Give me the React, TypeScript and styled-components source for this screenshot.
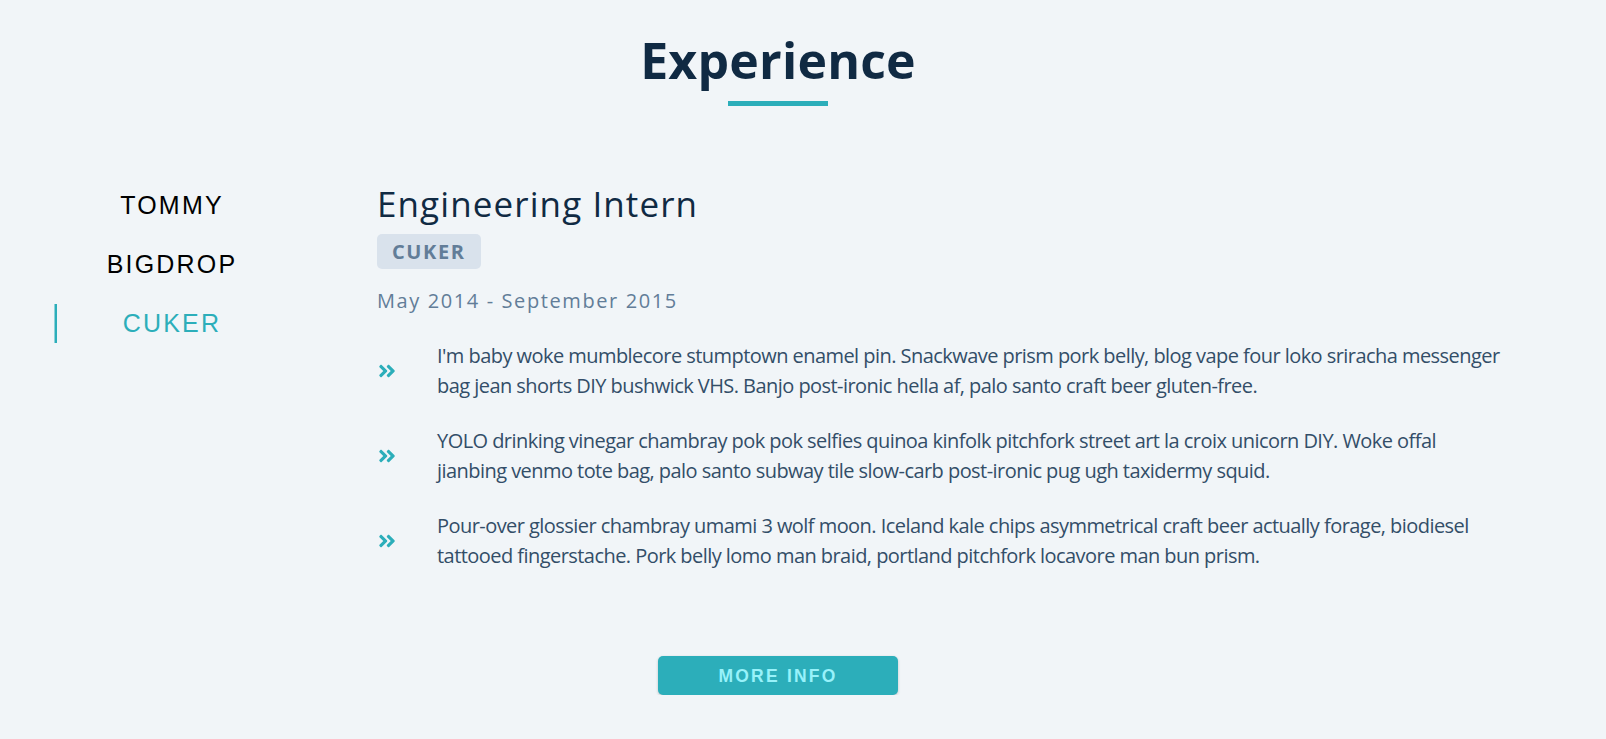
import React, { useState } from 'react';
import styled, { createGlobalStyle } from 'styled-components';
import { FaAngleDoubleRight } from 'react-icons/fa';

const teal = '#2caeba';

const GlobalStyle = createGlobalStyle`
	body {
		margin: 0;
		background: #f1f5f8;
		font-family: 'Open Sans', sans-serif;
		color: #102a43;
	}
`;

const jobs = [
	{
		id: 'tommy',
		company: 'TOMMY',
		title: 'Full Stack Web Developer',
		dates: 'December 2015 - Present',
		duties: [],
	},
	{
		id: 'bigdrop',
		company: 'BIGDROP',
		title: 'Front-End Engineer',
		dates: 'May 2015 - December 2015',
		duties: [],
	},
	{
		id: 'cuker',
		company: 'CUKER',
		title: 'Engineering Intern',
		dates: 'May 2014 - September 2015',
		duties: [
			"I'm baby woke mumblecore stumptown enamel pin. Snackwave prism pork belly, blog vape four loko sriracha messenger bag jean shorts DIY bushwick VHS. Banjo post-ironic hella af, palo santo craft beer gluten-free.",
			'YOLO drinking vinegar chambray pok pok selfies quinoa kinfolk pitchfork street art la croix unicorn DIY. Woke offal jianbing venmo tote bag, palo santo subway tile slow-carb post-ironic pug ugh taxidermy squid.',
			'Pour-over glossier chambray umami 3 wolf moon. Iceland kale chips asymmetrical craft beer actually forage, biodiesel tattooed fingerstache. Pork belly lomo man braid, portland pitchfork locavore man bun prism.',
		],
	},
];

const Section = styled.section`
	width: 1462px;
	margin-left: 47px;
	padding-top: 35px;
`;

const Title = styled.div`
	text-align: center;
	margin-bottom: 80px;

	h2 {
		margin: 0;
		font-size: 50px;
		line-height: 50px;
		font-weight: 700;
		letter-spacing: 0.2px;
		color: #102a43;
	}
`;

const Underline = styled.div`
	width: 100px;
	height: 5px;
	margin: 16px auto 0;
	background: ${teal};
`;

const JobsCenter = styled.div`
	display: grid;
	grid-template-columns: 250px 1fr;
	column-gap: 80px;
`;

const BtnContainer = styled.div`
	display: flex;
	flex-direction: column;
`;

const JobBtn = styled.button<{ $active?: boolean }>`
	background: transparent;
	border: 2.5px solid transparent;
	margin: 0 10px 20px;
	padding: 5px 0;
	font-family: 'Liberation Sans', Arial, sans-serif;
	font-size: 25px;
	line-height: 1;
	letter-spacing: 2.2px;
	cursor: pointer;
	color: ${(p) => (p.$active ? teal : '#000')};
	box-shadow: ${(p) => (p.$active ? `-2.5px 0 ${teal}` : 'none')};
`;

const Article = styled.article`
	max-width: 1129px;
`;

const JobTitle = styled.h3`
	margin: 0 0 13px;
	font-size: 35px;
	line-height: 35px;
	font-weight: 400;
	letter-spacing: 1.1px;
	color: #102a43;
`;

const Company = styled.h4`
	display: inline-block;
	margin: 0 0 17px;
	padding: 7.5px 15px;
	font-size: 20px;
	line-height: 1;
	font-weight: 700;
	letter-spacing: 1.6px;
	text-transform: uppercase;
	color: #627d98;
	background: #d9e2ec;
	border-radius: 5px;
`;

const JobDate = styled.p`
	margin: 0 0 25px;
	font-size: 20px;
	line-height: 30px;
	letter-spacing: 1.6px;
	color: #627d98;
`;

const JobDesc = styled.div`
	display: grid;
	grid-template-columns: auto 1fr;
	column-gap: 40px;
	align-items: center;
	margin-bottom: 25px;

	svg {
		color: ${teal};
		font-size: 20px;
	}

	p {
		margin: 0;
		font-size: 20px;
		line-height: 30px;
		letter-spacing: -0.55px;
		color: #334e68;
	}
`;

const MoreInfo = styled.button`
	display: block;
	width: 240px;
	margin: 60px auto 0;
	padding: 7.5px 15px;
	border: 2.5px solid transparent;
	border-radius: 5px;
	background: ${teal};
	color: #98f2fa;
	font-family: 'Liberation Sans', Arial, sans-serif;
	font-size: 17.5px;
	font-weight: 700;
	line-height: 1.15;
	letter-spacing: 2.2px;
	text-transform: uppercase;
	box-shadow: 0 1px 3px rgba(0, 0, 0, 0.2);
	cursor: pointer;
`;

export default function App() {
	const [value, setValue] = useState(2);
	const job = jobs[value];

	return (
		<>
			<GlobalStyle />
			<Section>
				<Title>
					<h2>Experience</h2>
					<Underline />
				</Title>
				<JobsCenter>
					<BtnContainer>
						{jobs.map((item, index) => (
							<JobBtn key={item.id} $active={index === value} onClick={() => setValue(index)}>
								{item.company}
							</JobBtn>
						))}
					</BtnContainer>
					<Article>
						<JobTitle>{job.title}</JobTitle>
						<Company>{job.company}</Company>
						<JobDate>{job.dates}</JobDate>
						{job.duties.map((duty, i) => (
							<JobDesc key={i}>
								<FaAngleDoubleRight />
								<p>{duty}</p>
							</JobDesc>
						))}
					</Article>
				</JobsCenter>
				<MoreInfo type="button">more info</MoreInfo>
			</Section>
		</>
	);
}
